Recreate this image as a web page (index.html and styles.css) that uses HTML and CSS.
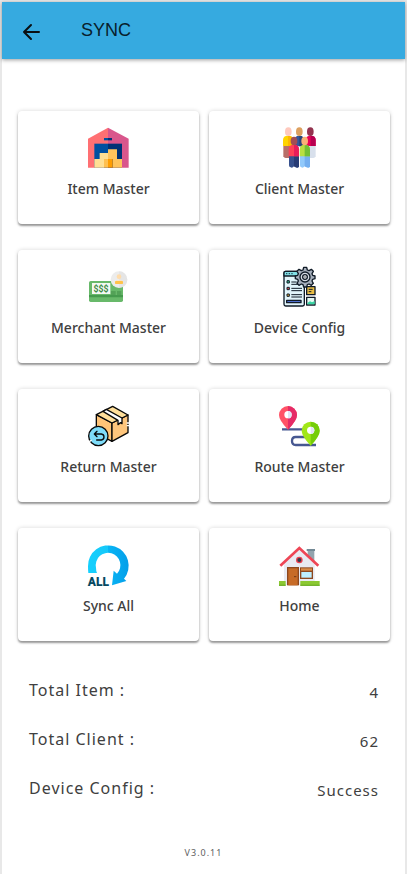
FILE: index.html
```html
<!DOCTYPE html>
<html lang="en">
<head>
<meta charset="utf-8">
<meta name="viewport" content="width=device-width, initial-scale=1">
<title>Sync</title>
<link rel="stylesheet" href="styles.css">
</head>
<body>
<div class="app">
  <header class="bar">
    <button class="back" type="button" aria-label="Back">
      <svg width="18" height="18" viewBox="0 0 18 18" fill="none" stroke="#0a0f12" stroke-width="2" stroke-linecap="round" stroke-linejoin="round"><path d="M17 9H2M9 2L2 9l7 7"/></svg>
    </button>
    <h1 class="title">SYNC</h1>
  </header>
  <main class="content">
    <div class="grid">
      <button class="card" type="button">
        <svg class="icon" viewBox="30 33 126 126">
          <path fill="#ff7073" d="M90 38L30 71v87h60z"/><path fill="#d9568c" d="M90 38l62 33v87H90z"/>
          <path fill="#0050a0" d="M49 86h41v72H49z"/><path fill="#003175" d="M90 86h42v72H90z"/>
          <path fill="#0050a0" d="M78 69h12v7H78z"/><path fill="#003175" d="M90 69h12v7H90z"/>
          <path fill="#ffdf93" d="M65 114h25v18H65zM49 132h29v26H49z"/><path fill="#ffc45c" d="M90 103h27v29H90zM104 132h28v26h-28z"/>
          <path fill="#ffc050" d="M78 132h12v26H78z"/><path fill="#ff9d00" d="M90 132h14v26H90z"/>
        </svg>
        <span>Item Master</span>
      </button>
      <button class="card" type="button">
        <svg class="icon" viewBox="27 33 126 126">
          <path fill="#b76f69" d="M40 90h29v34q-2 5-7 5h-15q-5 0-7-5z"/><path fill="#d8e0ec" d="M107 90h30v34q-2 5-7 5h-16q-5 0-7-5z"/>
          <path fill="#ffd400" d="M39 93V75q0-13 15-13 15 0 15 13v18z"/><path fill="#ffb600" d="M54 62q15 0 15 13v18H54z"/>
          <path fill="#34569b" d="M73 94V76q0-14 15-14 14 0 14 14v18z"/><path fill="#294477" d="M88 62q14 0 14 14v18H88z"/>
          <path fill="#e90055" d="M107 93V75q0-13 15-13 15 0 15 13v18z"/><path fill="#b70051" d="M122 62q15 0 15 13v18h-15z"/>
          <g><ellipse cx="55" cy="50" rx="10" ry="13" fill="#ffc9bd"/><ellipse cx="88" cy="50" rx="10" ry="13" fill="#dda05f"/><ellipse cx="121" cy="50" rx="10" ry="13" fill="#93334f"/></g>
          <path fill="#37518e" d="M57 120h30v35q-5 6-10 1l-5-2q-5 6-10 3-5 0-5-6z"/><path fill="#283c75" d="M72 120h15v35q-7 6-15-1z"/>
          <path fill="#91c9fb" d="M90 120h30v35q-5 6-10 1l-6-2q-5 6-10 3-4 0-4-6z"/><path fill="#74aff0" d="M104 120h16v35q-7 6-16-1z"/>
          <path fill="#ff4057" d="M56 124v-20q0-15 16-15 15 0 15 15v20z"/><path fill="#e91c59" d="M72 89q15 0 15 15v20H72z"/>
          <path fill="#b9df41" d="M89 124v-20q0-15 15-15 16 0 16 15v20z"/><path fill="#73bf36" d="M104 89q16 0 16 15v20h-16z"/>
          <ellipse cx="72" cy="78" rx="10" ry="13" fill="#a34d53"/><ellipse cx="104" cy="78" rx="10" ry="13" fill="#f9b177"/>
        </svg>
        <span>Client Master</span>
      </button>
      <button class="card" type="button">
        <svg class="icon" viewBox="30 21 126 126">
          <rect x="33" y="69" width="102" height="63" rx="5" fill="#68b96a"/><path fill="#459a4d" d="M33 111h102v7H33z"/>
          <path fill="#f3f8f3" d="M42 75h55v33H42z"/>
          <text class="cash" x="69" y="102" text-anchor="middle">$$$</text>
          <path stroke="#3f8a45" stroke-width="3" d="M99 102h14M117 102h13M99 108h14M117 108h13"/>
          <circle cx="123" cy="65" r="25" fill="#ececec"/><path fill="#dedede" d="M123 40a25 25 0 0 1 0 50z" opacity=".5"/>
          <circle cx="123" cy="56" r="7" fill="#ffdcaa"/><path fill="#ffe4bd" d="M114 67h18v5h-18z"/><rect x="111" y="69" width="24" height="9" rx="2" fill="#ffc34a"/>
        </svg>
        <span>Merchant Master</span>
      </button>
      <button class="card" type="button">
        <svg class="icon" viewBox="27 21 126 126">
          <g stroke="#101b27" stroke-width="4" stroke-linejoin="round">
            <rect x="42" y="40" width="61" height="104" rx="5" fill="#e2f5fb"/><path d="M42 54V44q0-4 4-4h50v14z" fill="#82dfe6"/>
            <path d="M110 86h25v24h-25z" fill="#e9bd45"/><path d="M110 118h25v23h-25z" fill="#e6faf3"/>
            <path d="M112 135l8-5 6 3 8-4v10h-22z" fill="#38d4a3" stroke="none"/>
            <path d="M116 94h12M116 101h8" stroke-width="3"/><path d="M50 127h43v7H50z" fill="#4e6fd2"/>
            <path d="M64 72h16M64 79h20M64 91h32M64 98h32M64 110h32M64 117h32" stroke-width="3"/>
            <path d="M51 68h7v7h-7z" fill="#35c493" stroke-width="3"/><path d="M51 88h7v7h-7z" fill="#e94b50" stroke-width="3"/><path d="M51 108h7v7h-7z" fill="#e5af3f" stroke-width="3"/>
            <path d="M101 28h9l2 8 5 2 7-4 6 6-4 7 2 5 7 2v8l-7 2-2 5 4 7-6 6-7-4-5 2-2 7h-9l-2-7-5-2-7 4-6-6 4-7-2-5-7-2v-8l7-2 2-5-4-7 6-6 7 4 5-2z" fill="#a7b0bd"/>
            <circle cx="105" cy="57" r="15" fill="#d5dbe4"/><circle cx="105" cy="57" r="7" fill="#fff"/>
          </g>
          <circle cx="105" cy="57" r="2" fill="#101b27"/><path stroke="#173846" stroke-width="3" d="M48 47h4M56 47h4M64 47h4"/>
        </svg>
        <span>Device Config</span>
      </button>
      <button class="card" type="button">
        <svg class="icon" viewBox="30 21 126 126">
          <g stroke="#080808" stroke-width="4" stroke-linejoin="round" stroke-linecap="round">
            <path fill="#ffc477" d="M55 53l47 25v55l-47-25z"/><path fill="#ffc67c" d="M102 78l48-24v53l-48 26z"/>
            <path fill="#ffdf9a" d="M55 53l49-25 46 26-48 24z"/><path fill="#fff" d="M75 43l10-6 47 26v17l-5-3-7 6V70z"/>
            <circle cx="61" cy="117" r="29" fill="#7edcf9"/><path fill="none" d="M57 103l-8 8 8 8M50 111h20q8 1 8 9t-8 9H56"/>
          </g>
          <path stroke="#fff" stroke-width="4" d="M146 78h8M146 86h8M34 134l7-5"/>
        </svg>
        <span>Return Master</span>
      </button>
      <button class="card" type="button">
        <svg class="icon" viewBox="27 21 126 126">
          <path fill="none" stroke="#475891" stroke-width="7" d="M36 97h64M110 120H77q-11 0-11 12t11 12h61"/>
          <path fill="#ff5266" d="M54 98Q27 70 27 54a27 27 0 0 1 54 0q0 16-27 44z"/><path fill="#e52b67" d="M54 27a27 27 0 0 1 27 27q0 16-27 44z"/><circle cx="54" cy="53" r="11" fill="#fff"/><path fill="#e2e4f4" d="M54 42a11 11 0 0 1 0 22z"/>
          <path fill="#a2e719" d="M122 146q-27-29-27-45a27 27 0 0 1 54 0q0 16-27 45z"/><path fill="#75cd09" d="M122 74a27 27 0 0 1 27 27q0 16-27 45z"/><circle cx="122" cy="100" r="11" fill="#fff"/><path fill="#e2e4f4" d="M122 89a11 11 0 0 1 0 22z"/>
        </svg>
        <span>Route Master</span>
      </button>
      <button class="card" type="button">
        <svg class="icon" viewBox="30 18 126 126">
          <defs><linearGradient id="ring"><stop offset="0" stop-color="#15d0fd"/><stop offset=".5" stop-color="#15c8fa"/><stop offset=".5" stop-color="#08b5f5"/><stop offset="1" stop-color="#049ee9"/></linearGradient></defs>
          <path fill="url(#ring)" d="M31 108q-1-8-1-20a61 61 0 1 1 108 37l7 7-43 13 5-44 10 9A37 37 0 1 0 54 92q0 9 3 16z"/>
          <text class="all" x="61" y="146" text-anchor="middle">ALL</text>
        </svg>
        <span>Sync All</span>
      </button>
      <button class="card" type="button">
        <svg class="icon" viewBox="27 18 126 126">
          <path fill="#93a4ae" d="M113 39h20v38h-20z"/><path fill="#738995" d="M110 36h25v6h-25z"/>
          <path fill="#e9eaf2" d="M42 76l46-40 46 40v68H42z"/>
          <path fill="none" stroke="#ee4656" stroke-width="8" d="M31 86l57-53 57 53"/>
          <circle cx="88" cy="69" r="10" fill="#ed4050"/><circle cx="88" cy="69" r="6" fill="#343b49"/>
          <path fill="#8e481e" d="M51 90h36v55H51z"/><path fill="#c76b27" d="M55 94h28v51H55z"/><path stroke="#713817" stroke-width="3" d="M72 119h7"/>
          <path fill="#8e481e" d="M90 91h39v35H90z"/><path fill="#d88b49" d="M93 94h33v7H93z"/><path fill="#bdefff" d="M94 105h31v17H94z"/>
          <path fill="#8bc832" d="M27 132h20v14H27zM91 132h58v14H91z"/><path fill="#64a61f" d="M27 143h20v3H27zM91 143h58v3H91z"/>
        </svg>
        <span>Home</span>
      </button>
    </div>
    <dl class="stats">
      <div class="row"><dt>Total Item :</dt><dd>4</dd></div>
      <div class="row"><dt>Total Client :</dt><dd>62</dd></div>
      <div class="row"><dt>Device Config :</dt><dd>Success</dd></div>
    </dl>
  </main>
  <footer class="version">V3.0.11</footer>
</div>
</body>
</html>
```
FILE: styles.css
```css
* {
  box-sizing: border-box;
}

body {
  margin: 0;
  background: #fff;
  color: #404040;
  font-family: "Noto Sans", "Open Sans", sans-serif;
}

button {
  margin: 0;
  padding: 0;
  border: 0;
  background: none;
  color: inherit;
  font: inherit;
}

.app {
  min-height: 100vh;
  border: 2px solid #e8e8e8;
  border-bottom: 0;
}

.bar {
  display: flex;
  align-items: center;
  gap: 41px;
  height: 57px;
  padding: 0 20px;
  background: #36aae0;
  box-shadow: 0 1px 4px rgba(0, 0, 0, 0.4);
}

.back {
  display: flex;
  padding: 2px 0 0;
}

.title {
  margin: 0;
  padding-bottom: 2px;
  color: #08202c;
  font: 400 18px/22px "Liberation Sans", sans-serif;
}

.content {
  padding: 52px 15px 0 16px;
}

.grid {
  display: grid;
  grid-template-columns: 1fr 1fr;
  gap: 26px 10px;
}

.card {
  display: flex;
  flex-direction: column;
  align-items: center;
  gap: 11px;
  min-height: 113px;
  padding-top: 15px;
  border-radius: 4px;
  background: #fff;
  box-shadow: 0 2px 2px rgba(0, 0, 0, 0.36), 0 0 4px rgba(0, 0, 0, 0.16);
  font-size: 14px;
  font-weight: 500;
  line-height: 20px;
}

.icon {
  width: 42px;
  height: 42px;
  overflow: visible;
}

.cash {
  fill: #3f8a45;
  font: 700 26px Roboto, sans-serif;
}

.all {
  fill: #064861;
  font: 900 36px Roboto, sans-serif;
}

.stats {
  display: grid;
  gap: 23px;
  margin: 0;
  padding: 37px 11px 0;
  font-size: 16px;
  line-height: 24px;
  letter-spacing: 1px;
}

.row {
  display: flex;
  justify-content: space-between;
}

.row dd {
  margin: 0;
  padding-top: 2px;
  font-size: 15px;
}

.row dt {
  margin: 0;
}

.version {
  padding-top: 43px;
  color: #606060;
  font-size: 9px;
  line-height: 16px;
  letter-spacing: 1px;
  text-align: center;
}
```
